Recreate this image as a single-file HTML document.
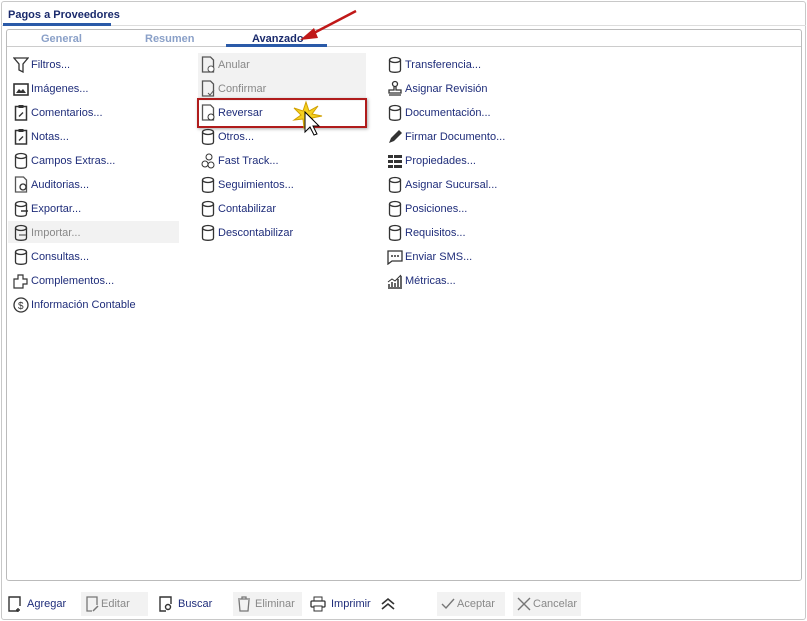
<!DOCTYPE html>
<html><head><style>
body{margin:0;width:807px;height:621px;background:#fff;font-family:"Liberation Sans",sans-serif;position:relative;overflow:hidden}
.outer{position:absolute;left:1px;top:1px;width:803px;height:617px;border:1px solid #c8c8c8;border-radius:3px}
.title{position:absolute;left:8px;top:9px;font-size:11px;font-weight:bold;color:#1a2a6c}
.tline{position:absolute;left:3px;top:23px;width:108px;height:3px;background:#2a5aa8}
.hsep{position:absolute;left:1px;top:25px;width:805px;height:1px;background:#ddd}
.panel{position:absolute;left:6px;top:29px;width:794px;height:550px;border:1px solid #bbb;border-radius:3px}
.tabs{position:absolute;left:7px;top:30px;width:794px;height:16px;border-bottom:1px solid #ccc}
.tab{position:absolute;top:33px;font-size:11px;font-weight:bold;color:#8aa0c8}
.tabline{position:absolute;left:226px;top:44px;width:101px;height:3px;background:#2a5aa8}
.it{position:absolute;font-size:11px;color:#1f2d7a;height:22px;line-height:24px;padding-left:18px;white-space:nowrap}
.it.dis{color:#888}
.ic{position:absolute;left:0;top:3px;width:16px;height:17px}
.bg{position:absolute;background:#f2f2f2}
.btn{position:absolute;top:592px;height:24px;line-height:25px;font-size:11px;color:#1f2d7a;padding-left:20px}
.btn.dis{color:#888;background:#f2f2f2}
</style></head><body>
<div class="outer"></div>
<div class="title">Pagos a Proveedores</div>
<div class="hsep"></div>
<div class="tline"></div>
<div class="panel"></div>
<div class="tabs"></div>
<div class="tab" style="left:41px">General</div>
<div class="tab" style="left:145px">Resumen</div>
<div class="tab" style="left:252px;color:#1a2a6c">Avanzado</div>
<div class="tabline"></div>
<svg style="position:absolute;left:296px;top:8px" width="64" height="34"><line x1="60" y1="3" x2="14" y2="27" stroke="#c01818" stroke-width="2.5"/><polygon points="4,32 18,20 22,30" fill="#c01818"/></svg>

<div class="bg" style="left:198px;top:53px;width:168px;height:48px"></div>
<div class="bg" style="left:8px;top:221px;width:171px;height:22px"></div>

<svg width="0" height="0" style="position:absolute"><defs>
<g id="db"><ellipse cx="8" cy="4" rx="5.5" ry="2.5" fill="none" stroke="#333" stroke-width="1.3"/><path d="M2.5 4v10c0 1.5 2.4 2.3 5.5 2.3s5.5-0.8 5.5-2.3V4" fill="none" stroke="#333" stroke-width="1.3"/></g>
<g id="doc"><rect x="2.5" y="2.5" width="11" height="13.5" fill="none" stroke="#333" stroke-width="1.5"/><rect x="5.5" y="1" width="5" height="3" fill="#333"/><path d="M6 12.5l4-4" stroke="#333" stroke-width="1.3"/></g>
<g id="page"><path d="M2.5 1h8l3 3v12h-11z" fill="none" stroke="#555" stroke-width="1.3"/></g>
</defs></svg>

<!-- column 1 -->
<div class="it" style="left:13px;top:53px"><svg class="ic"><path d="M1 2h14l-5 6v8l-4-2V8z" fill="none" stroke="#333" stroke-width="1.3"/></svg>Filtros...</div>
<div class="it" style="left:13px;top:77px"><svg class="ic"><rect x="1" y="4" width="14" height="11" fill="none" stroke="#333" stroke-width="1.6"/><path d="M3 13l3-4 2 2 2-2 3 4z" fill="#333"/></svg>Imágenes...</div>
<div class="it" style="left:13px;top:101px"><svg class="ic"><use href="#doc"/></svg>Comentarios...</div>
<div class="it" style="left:13px;top:125px"><svg class="ic"><use href="#doc"/></svg>Notas...</div>
<div class="it" style="left:13px;top:149px"><svg class="ic"><use href="#db"/></svg>Campos Extras...</div>
<div class="it" style="left:13px;top:173px"><svg class="ic"><use href="#page"/><circle cx="10" cy="11" r="3" fill="#fff" stroke="#333" stroke-width="1.3"/></svg>Auditorias...</div>
<div class="it" style="left:13px;top:197px"><svg class="ic"><use href="#db"/><path d="M8 11h7" stroke="#333" stroke-width="1.5"/></svg>Exportar...</div>
<div class="it dis" style="left:13px;top:221px"><svg class="ic"><use href="#db"/><path d="M6 11h7" stroke="#777" stroke-width="1.5"/></svg>Importar...</div>
<div class="it" style="left:13px;top:245px"><svg class="ic"><use href="#db"/></svg>Consultas...</div>
<div class="it" style="left:13px;top:269px"><svg class="ic"><path d="M1 7h4V3h5v4h4v5h-4v4H1z" fill="none" stroke="#333" stroke-width="1.2"/></svg>Complementos...</div>
<div class="it" style="left:13px;top:293px"><svg class="ic"><circle cx="8" cy="9" r="7" fill="none" stroke="#333" stroke-width="1.3"/><text x="5" y="13" font-size="10" fill="#333" font-family="Liberation Sans">$</text></svg>Información Contable</div>

<!-- column 2 -->
<div class="it dis" style="left:200px;top:53px"><svg class="ic"><use href="#page"/><circle cx="11" cy="13" r="3" fill="#fff" stroke="#555"/></svg>Anular</div>
<div class="it dis" style="left:200px;top:77px"><svg class="ic"><use href="#page"/><path d="M8 13l2 2 4-5" stroke="#555" fill="none"/></svg>Confirmar</div>
<div class="it" style="left:200px;top:101px"><svg class="ic"><use href="#page"/><circle cx="11" cy="13" r="3" fill="#fff" stroke="#333"/></svg>Reversar</div>
<div style="position:absolute;left:197px;top:98px;width:166px;height:26px;border:2px solid #b01c1c;box-shadow:1px 1px 3px #aaa"></div>
<svg style="position:absolute;left:290px;top:98px" width="40" height="44"><polygon points="16,4 19,13 28,8 22,16 32,18 22,20 26,28 18,22 14,30 13,21 4,22 11,17 4,10 13,13" fill="#f5d020" stroke="#d0a000"/><path d="M15 14v20l5-5 4 8 3-1-4-8h6z" fill="#fff" stroke="#000"/></svg>
<div class="it" style="left:200px;top:125px"><svg class="ic"><use href="#db"/></svg>Otros...</div>
<div class="it" style="left:200px;top:149px"><svg class="ic"><circle cx="5" cy="12" r="3" fill="none" stroke="#333"/><circle cx="11" cy="13" r="3" fill="none" stroke="#333"/><circle cx="9" cy="5" r="3" fill="none" stroke="#333"/></svg>Fast Track...</div>
<div class="it" style="left:200px;top:173px"><svg class="ic"><use href="#db"/></svg>Seguimientos...</div>
<div class="it" style="left:200px;top:197px"><svg class="ic"><use href="#db"/></svg>Contabilizar</div>
<div class="it" style="left:200px;top:221px"><svg class="ic"><use href="#db"/></svg>Descontabilizar</div>

<!-- column 3 -->
<div class="it" style="left:387px;top:53px"><svg class="ic"><use href="#db"/></svg>Transferencia...</div>
<div class="it" style="left:387px;top:77px"><svg class="ic"><circle cx="8" cy="4" r="2.5" fill="none" stroke="#333" stroke-width="1.3"/><path d="M7 7v3H2v3h12v-3H9V7M2 15h12" fill="none" stroke="#333" stroke-width="1.3"/></svg>Asignar Revisión</div>
<div class="it" style="left:387px;top:101px"><svg class="ic"><use href="#db"/></svg>Documentación...</div>
<div class="it" style="left:387px;top:125px"><svg class="ic"><path d="M2 15l2-5 8-8 3 3-8 8z" fill="#333"/></svg>Firmar Documento...</div>
<div class="it" style="left:387px;top:149px"><svg class="ic"><path d="M1 3h5v3H1zM7 3h8v3H7zM1 8h5v3H1zM7 8h8v3H7zM1 13h5v3H1zM7 13h8v3H7z" fill="#333"/></svg>Propiedades...</div>
<div class="it" style="left:387px;top:173px"><svg class="ic"><use href="#db"/></svg>Asignar Sucursal...</div>
<div class="it" style="left:387px;top:197px"><svg class="ic"><use href="#db"/></svg>Posiciones...</div>
<div class="it" style="left:387px;top:221px"><svg class="ic"><use href="#db"/></svg>Requisitos...</div>
<div class="it" style="left:387px;top:245px"><svg class="ic"><path d="M1 3h14v10H5l-4 3z" fill="none" stroke="#333" stroke-width="1.3"/><path d="M4 8h2M7 8h2M10 8h2" stroke="#333" stroke-width="1.5"/></svg>Enviar SMS...</div>
<div class="it" style="left:387px;top:269px"><svg class="ic"><path d="M1 16h14M2 15v-3M5 15v-5M8 15v-4M11 15V7M14 15V4" stroke="#333" stroke-width="1.5"/><path d="M1 10l4-3 3 2 6-6" stroke="#333" fill="none"/></svg>Métricas...</div>

<!-- bottom bar -->
<div class="btn" style="left:7px"><svg class="ic" style="top:4px"><path d="M11 15H2V1h11v9M11 12v4M9 14h4" fill="none" stroke="#333" stroke-width="1.4"/></svg>Agregar</div>
<div class="btn dis" style="left:81px;width:47px"><svg class="ic" style="top:4px;left:3px"><path d="M8 15H3V1h10v8" fill="none" stroke="#777" stroke-width="1.3"/><path d="M9 15l5-5" stroke="#777" stroke-width="1.5"/></svg>Editar</div>
<div class="btn" style="left:158px"><svg class="ic" style="top:4px"><path d="M8 15H2V1h11v7" fill="none" stroke="#333" stroke-width="1.4"/><circle cx="10" cy="11" r="2.5" fill="none" stroke="#333" stroke-width="1.4"/></svg>Buscar</div>
<div class="btn dis" style="left:233px;width:47px;padding-left:22px"><svg class="ic" style="top:4px;left:3px"><path d="M2 3h12M6 3V1h4v2M3 4l1 11h8l1-11" fill="none" stroke="#777" stroke-width="1.3"/></svg>Eliminar</div>
<div class="btn" style="left:310px;padding-left:21px"><svg class="ic" style="top:4px"><rect x="4" y="1" width="8" height="4" fill="none" stroke="#333"/><rect x="1" y="5" width="14" height="6" rx="1" fill="none" stroke="#333" stroke-width="1.3"/><rect x="4" y="10" width="8" height="5" fill="#fff" stroke="#333"/></svg>Imprimir</div>
<svg style="position:absolute;left:380px;top:597px" width="16" height="14"><path d="M2 7l6-5 6 5M2 12l6-5 6 5" fill="none" stroke="#333" stroke-width="1.6"/></svg>
<div class="btn dis" style="left:437px;width:48px"><svg class="ic" style="top:4px;left:3px"><path d="M2 8l4 4 8-9" fill="none" stroke="#777" stroke-width="1.4"/></svg>Aceptar</div>
<div class="btn dis" style="left:513px;width:48px"><svg class="ic" style="top:4px;left:3px"><path d="M2 2l12 12M14 2L2 14" stroke="#777" stroke-width="1.4"/></svg>Cancelar</div>
</body></html>
